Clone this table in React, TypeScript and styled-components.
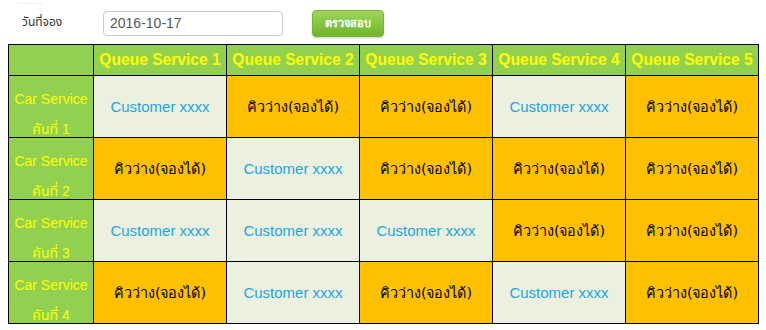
import React from "react"
import styled, { createGlobalStyle } from "styled-components"

const GlobalStyle = createGlobalStyle`
  body {
    margin: 0;
    background: #ffffff;
    font-family: Tahoma, "DejaVu Sans", "Noto Sans Thai", "Noto Sans", sans-serif;
  }
`

const Page = styled.div`
  width: 766px;
  height: 330px;
  overflow: hidden;
  position: relative;
`

const TopTab = styled.div`
  position: absolute;
  top: -10px;
  left: 16px;
  width: 28px;
  height: 13px;
  border-radius: 4px;
  border-bottom: 1px solid #f0f0f0;
`

const FilterBar = styled.div`
  display: flex;
  align-items: center;
  height: 44px;
  padding-left: 22px;
`

const Label = styled.label`
  width: 81px;
  font-size: 12px;
  color: #333333;
`

const DateInput = styled.input`
  box-sizing: border-box;
  width: 180px;
  height: 25px;
  margin-top: 2px;
  padding: 0 6px;
  border: 1px solid #cccccc;
  border-radius: 4px;
  font-family: "Liberation Sans", Arial, sans-serif;
  font-size: 14px;
  color: #555555;
`

const CheckButton = styled.button`
  box-sizing: border-box;
  margin-left: 29px;
  margin-top: 2px;
  width: 72px;
  height: 27px;
  border: 1px solid #7ab32e;
  border-radius: 4px;
  background: linear-gradient(#9fd65a, #6fb52a);
  color: #ffffff;
  font-size: 11px;
  font-weight: bold;
  box-shadow: 0 1px 2px rgba(0, 0, 0, 0.2);
`

const Grid = styled.table`
  margin-left: 8px;
  width: 751px;
  border-collapse: collapse;
  table-layout: fixed;
`

const HeadCell = styled.th`
  height: 30px;
  padding: 0;
  border: 1px solid #000000;
  background: #92d050;
  color: #ffff00;
  font-family: "Liberation Sans", Arial, sans-serif;
  font-size: 15.6px;
  font-weight: bold;
  text-align: center;
  white-space: nowrap;
`

const RowHead = styled.th`
  padding: 0;
  border: 1px solid #000000;
  background: #92d050;
  color: #ffff00;
  font-family: "Liberation Sans", "Noto Sans Thai", "DejaVu Sans", sans-serif;
  font-size: 14px;
  font-weight: normal;
  text-align: center;
  vertical-align: top;
`

const RowLabel = styled.div`
  box-sizing: border-box;
  height: 61px;
  padding-top: 8px;
  line-height: 30px;
  overflow: visible;
  white-space: nowrap;
`

const SlotCell = styled.td<{ $booked: boolean }>`
  height: 61px;
  padding: 0;
  border: 1px solid #000000;
  background: ${(p) => (p.$booked ? "#ebf1de" : "#ffc000")};
  color: ${(p) => (p.$booked ? "#1aa6e4" : "#000000")};
  font-family: ${(p) =>
    p.$booked ? `"Liberation Sans", Arial, sans-serif` : `Tahoma, "DejaVu Sans", sans-serif`};
  font-size: ${(p) => (p.$booked ? "15px" : "14.4px")};
  text-align: center;
  vertical-align: middle;
`

const schedule = [
  [1, 0, 0, 1, 0],
  [0, 1, 0, 0, 0],
  [1, 1, 1, 0, 0],
  [0, 1, 0, 1, 0],
]

const App = () => {
  return (
    <Page>
      <GlobalStyle />
      <TopTab />
      <FilterBar>
        <Label>วันที่จอง</Label>
        <DateInput defaultValue="2016-10-17" />
        <CheckButton>ตรวจสอบ</CheckButton>
      </FilterBar>
      <Grid>
        <colgroup>
          <col style={{ width: 85 }} />
          <col />
          <col />
          <col />
          <col />
          <col />
        </colgroup>
        <thead>
          <tr>
            <HeadCell />
            {[1, 2, 3, 4, 5].map((n) => (
              <HeadCell key={n}>Queue Service {n}</HeadCell>
            ))}
          </tr>
        </thead>
        <tbody>
          {schedule.map((row, i) => (
            <tr key={i}>
              <RowHead>
                <RowLabel>
                  Car Service
                  <br />
                  คันที่ {i + 1}
                </RowLabel>
              </RowHead>
              {row.map((booked, j) => (
                <SlotCell key={j} $booked={!!booked}>
                  {booked ? "Customer xxxx" : "คิวว่าง(จองได้)"}
                </SlotCell>
              ))}
            </tr>
          ))}
        </tbody>
      </Grid>
    </Page>
  )
}

export default App
